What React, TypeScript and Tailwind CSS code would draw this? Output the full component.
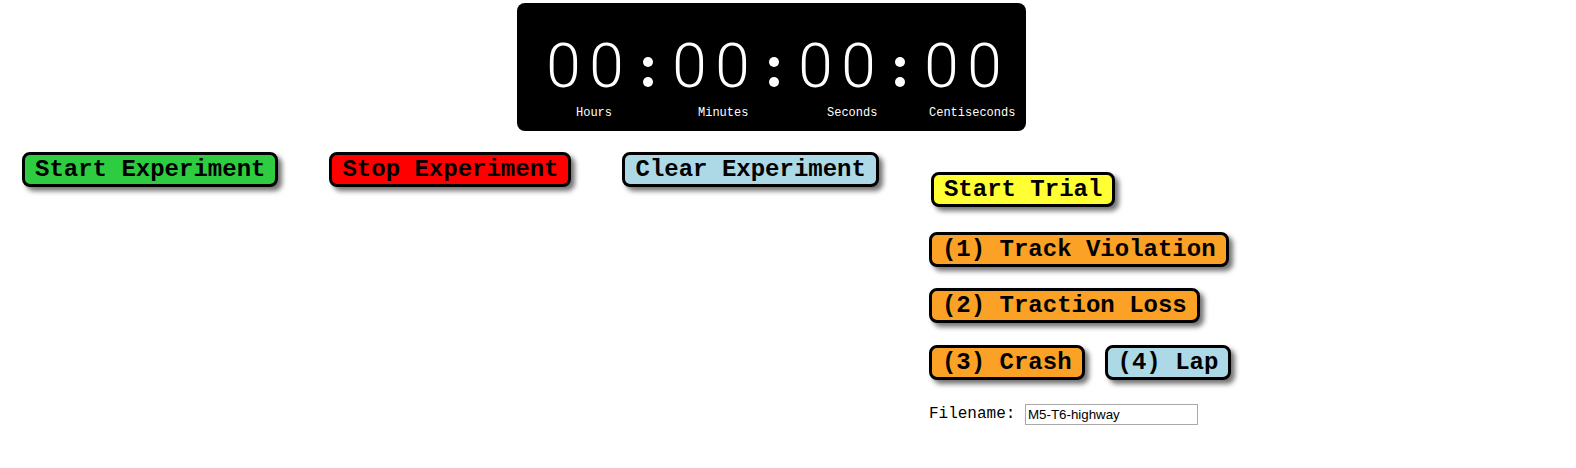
import React from "react";

const btn =
  "border-[3px] border-black rounded-[8px] px-[10px] py-[1px] text-[24px] leading-[27px] font-bold text-black shadow-[4px_4px_5px_rgba(0,0,0,0.55)] whitespace-nowrap";

const mono = '"Courier New", "Nimbus Mono PS", "Liberation Mono", monospace';

function Pair() {
  return (
    <div className="flex">
      <span className="w-[43px] text-center">0</span>
      <span className="w-[43px] text-center">0</span>
    </div>
  );
}

function Colon() {
  return (
    <div className="flex flex-col pt-[22px] gap-[10px] w-[10px]">
      <div className="w-[10px] h-[10px] rounded-full bg-white" />
      <div className="w-[10px] h-[10px] rounded-full bg-white" />
    </div>
  );
}

export default function App() {
  return (
    <div className="w-[1576px] h-[468px] bg-white overflow-hidden" style={{ fontFamily: mono }}>
      {/* Timer */}
      <div className="ml-[517px] mt-[3px] w-[509px] h-[128px] bg-black rounded-[8px] pt-[32px]">
        <div
          className="flex pl-[25px] gap-[15px] text-white text-[62px] leading-[62px] font-light h-[62px]"
          style={{ fontFamily: "Roboto, 'Open Sans', sans-serif" }}
        >
          <Pair />
          <Colon />
          <Pair />
          <Colon />
          <Pair />
          <Colon />
          <Pair />
        </div>
        <div className="flex pl-[59px] mt-[9px] text-[12px] leading-[14px] text-white">
          <div className="w-[122px]">Hours</div>
          <div className="w-[129px]">Minutes</div>
          <div className="w-[102px]">Seconds</div>
          <div>Centiseconds</div>
        </div>
      </div>

      {/* Controls */}
      <div className="flex items-start gap-[50px] pl-[22px]">
        <div className="flex gap-[51px] mt-[21px]">
          <button className={`${btn} bg-[#2ecc40]`}>Start Experiment</button>
          <button className={`${btn} bg-[#ff0000]`}>Stop Experiment</button>
          <button className={`${btn} bg-[#add8e6]`}>Clear Experiment</button>
        </div>
        <div className="flex flex-col items-start mt-[41px]">
          <button className={`${btn} bg-[#ffff33] ml-[2px]`}>Start Trial</button>
          <button className={`${btn} bg-[#fba126] mt-[25px]`}>(1) Track Violation</button>
          <button className={`${btn} bg-[#fba126] mt-[21px]`}>(2) Traction Loss</button>
          <div className="flex gap-[20px] mt-[22px]">
            <button className={`${btn} bg-[#fba126]`}>(3) Crash</button>
            <button className={`${btn} bg-[#add8e6]`}>(4) Lap</button>
          </div>
          <div className="flex items-center mt-[22px] text-[16px] text-black">
            <span className="whitespace-pre">Filename: </span>
            <input
              className="w-[173px] h-[21px] border border-[#a9a9a9] px-[2px] text-[13.33px] text-black outline-none"
              style={{ fontFamily: '"Liberation Sans", Arial, sans-serif' }}
              defaultValue="M5-T6-highway"
            />
          </div>
        </div>
      </div>
    </div>
  );
}
